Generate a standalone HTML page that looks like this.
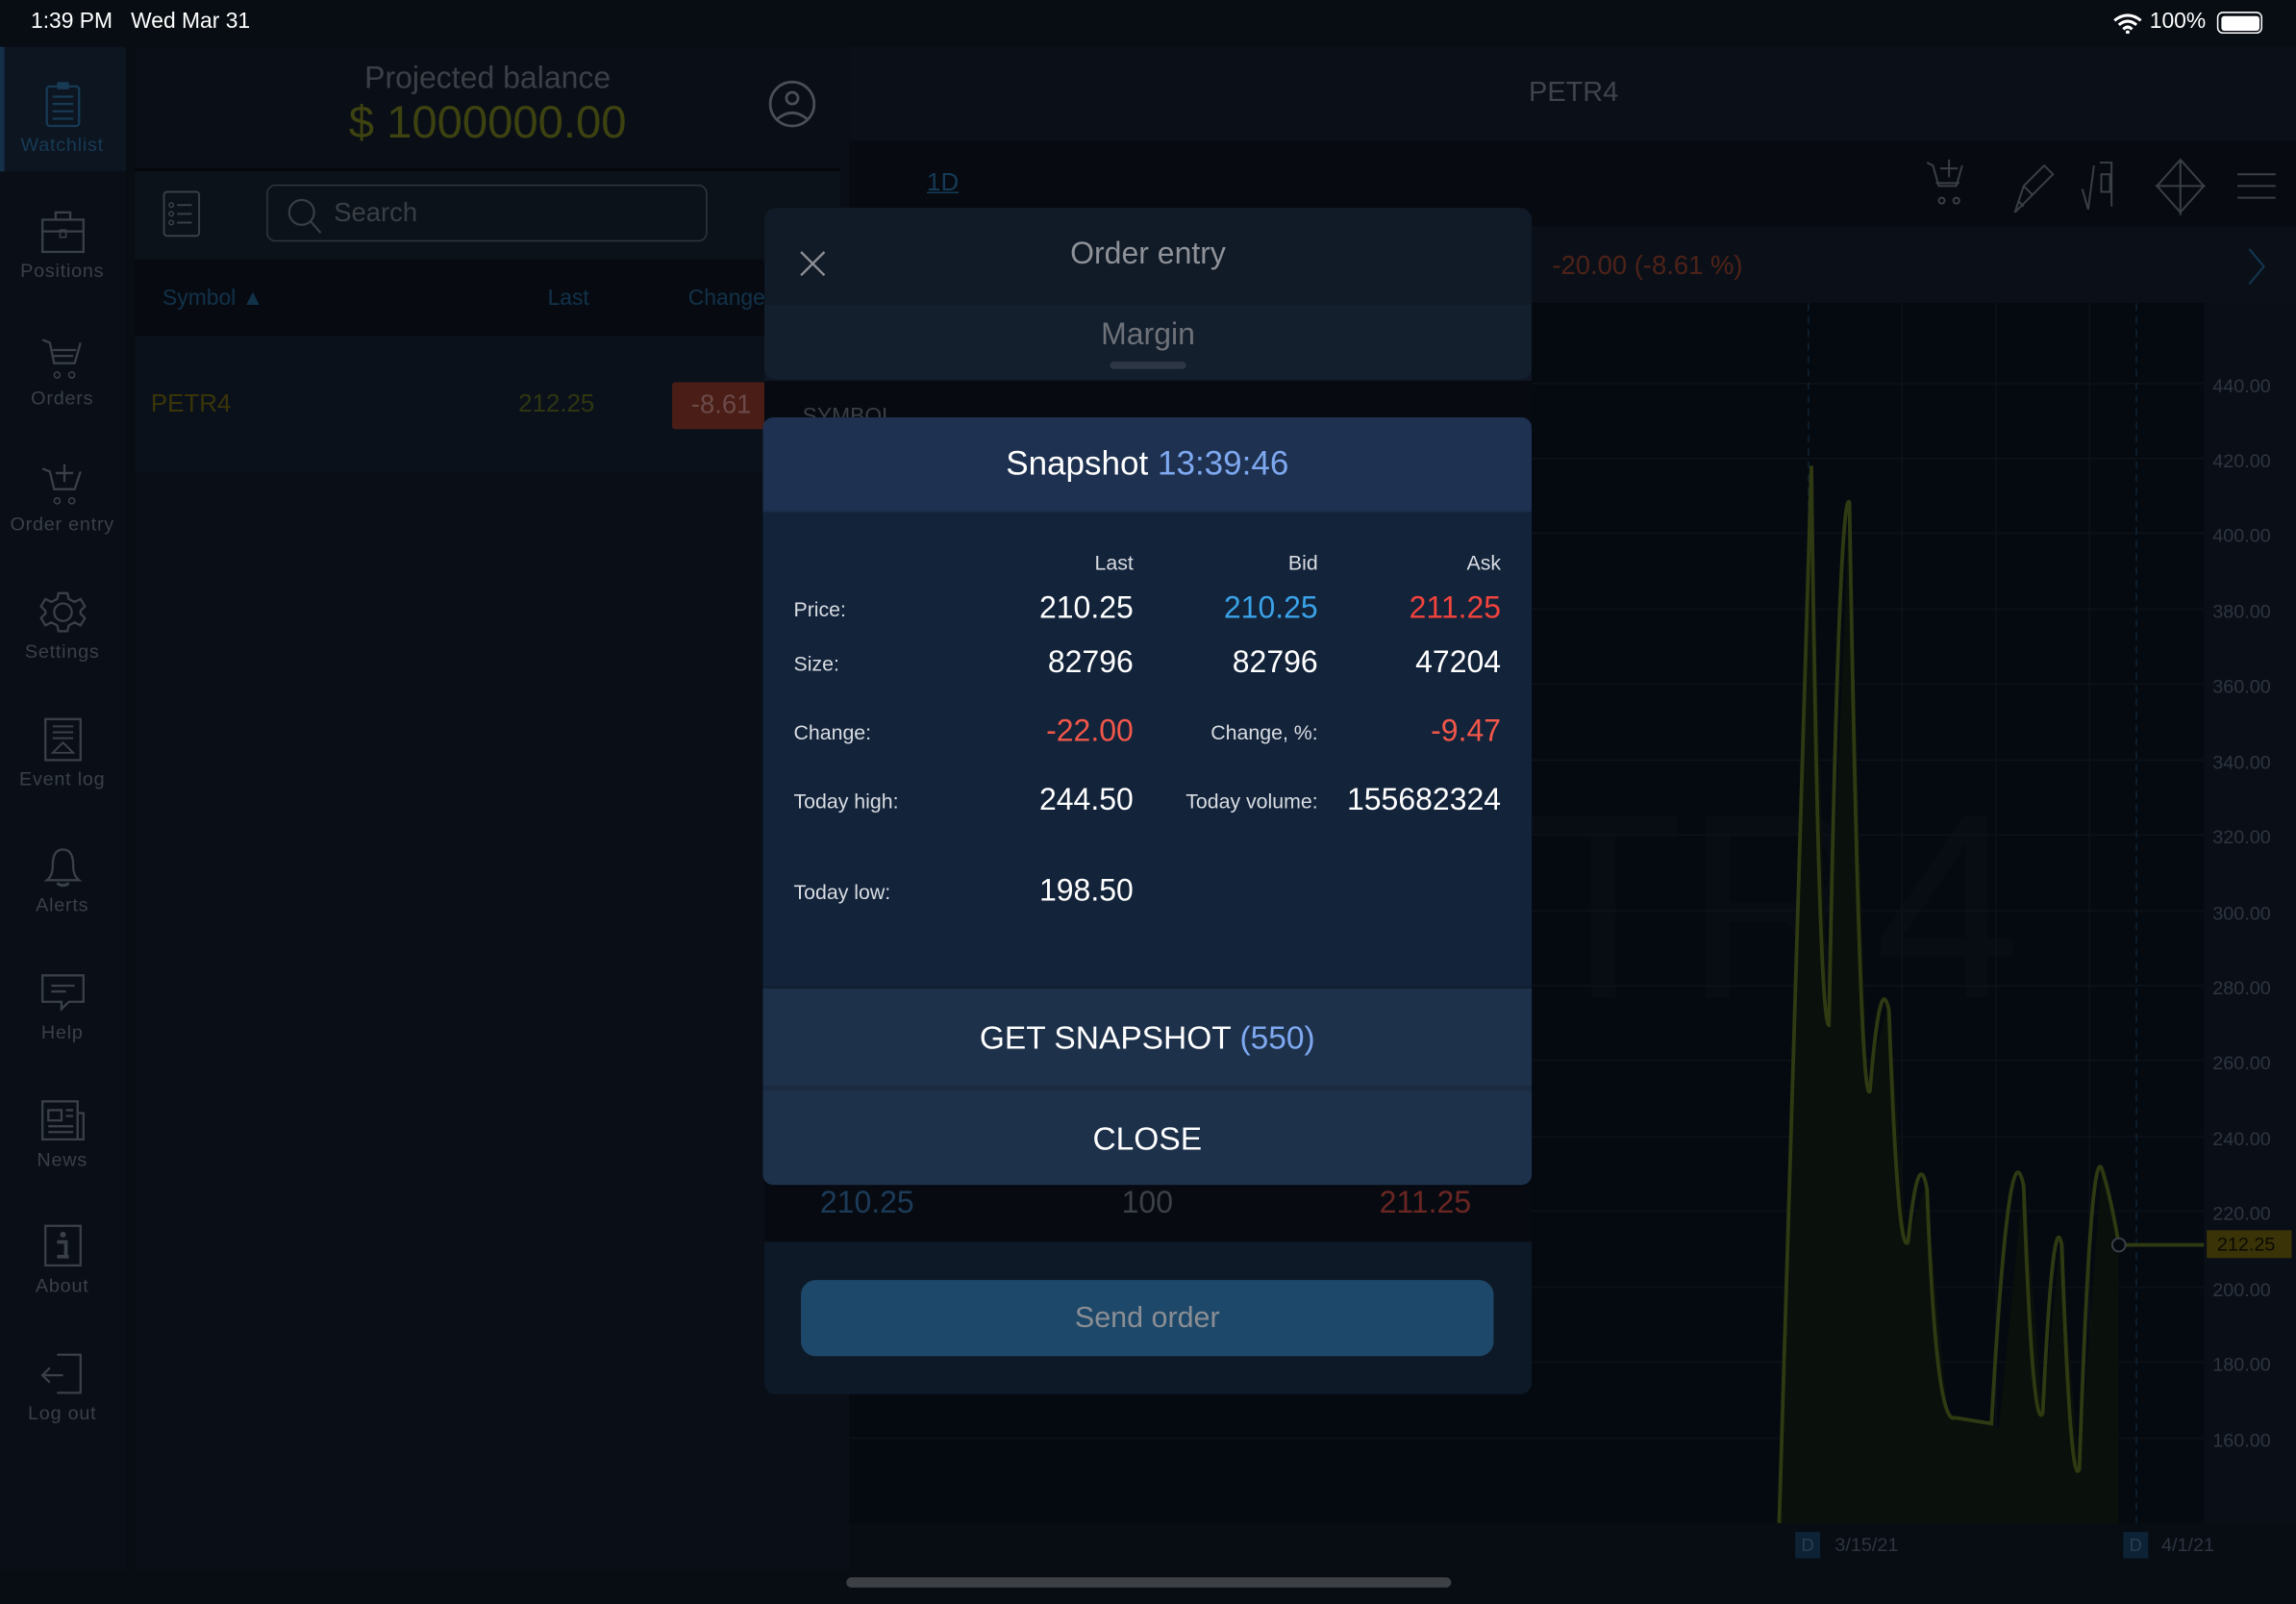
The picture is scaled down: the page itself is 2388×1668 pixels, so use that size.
<!DOCTYPE html>
<html><head><meta charset="utf-8">
<style>
*{margin:0;padding:0;box-sizing:border-box}
html,body{width:2388px;height:1668px;overflow:hidden;background:#0a0f16}
#s{position:absolute;left:0;top:0;width:1568px;height:1095px;transform:scale(1.523);transform-origin:0 0;font-family:"Liberation Sans",sans-serif;background:#080d14;color:#fff}
.a{position:absolute}
.t{white-space:nowrap}
.nav{position:absolute;left:0;width:85px;text-align:center;font-size:13px;color:#3a4048;letter-spacing:.5px}
.nav svg{display:block;margin:0 auto 4px}
.r{position:absolute;font-size:21px;text-align:right;white-space:nowrap}
.l{position:absolute;left:542px;font-size:14px;color:#d8dce2;white-space:nowrap}
.ax{position:absolute;left:1511px;font-size:13px;color:#2e3540}
</style></head><body>
<div id="s">
<div class="a t" style="left:21px;top:6px;font-size:15px;color:#fff">1:39 PM &nbsp;&nbsp;Wed Mar 31</div>
<div class="a t" style="left:1468px;top:6px;font-size:15px">100%</div>
<svg class="a" style="left:1443px;top:9px" width="20" height="14" viewBox="0 0 20 14"><path d="M1 5 Q10 -2 19 5 M4 8 Q10 3 16 8 M7 11 Q10 8 13 11" stroke="#fff" stroke-width="2" fill="none"/><circle cx="10" cy="13" r="1.3" fill="#fff"/></svg>
<div class="a" style="left:1514px;top:8px;width:31px;height:15px;border:1.5px solid #fff;border-radius:4px;padding:1.5px"><div style="width:100%;height:100%;background:#fff;border-radius:2px"></div></div>

<div class="a" style="left:0;top:32px;width:86px;height:1040px;background:#0a0f17"></div>
<div class="a" style="left:0;top:32px;width:86px;height:85px;background:#0d1520;border-left:3px solid #16304a"></div>
<div class="nav" style="top:55px;color:#173a55"><svg width="26" height="32" viewBox="0 0 26 32"><rect x="2" y="4" width="22" height="27" rx="2" fill="none" stroke="#173a55" stroke-width="1.5"/><rect x="9" y="1" width="8" height="5" fill="#173a55"/><path d="M6 11h14M6 16h14M6 21h14M6 26h14" stroke="#173a55" stroke-width="1.5"/></svg>Watchlist</div>
<div class="nav" style="top:143px"><svg width="32" height="30" viewBox="0 0 32 30"><rect x="2" y="7" width="28" height="22" fill="none" stroke="#3a4048" stroke-width="1.5"/><path d="M11 7V2h10v5M2 15h28" stroke="#3a4048" stroke-width="1.5" fill="none"/><rect x="14" y="14" width="4" height="5" fill="none" stroke="#3a4048"/></svg>Positions</div>
<div class="nav" style="top:230px"><svg width="32" height="30" viewBox="0 0 32 30"><path d="M2 2l5 2 3 14h14l4-14M9 9h16M9 13h14M10 18h14" stroke="#3a4048" stroke-width="1.5" fill="none"/><circle cx="12" cy="26" r="2" stroke="#3a4048" fill="none"/><circle cx="22" cy="26" r="2" stroke="#3a4048" fill="none"/></svg>Orders</div>
<div class="nav" style="top:316px"><svg width="32" height="30" viewBox="0 0 32 30"><path d="M2 4l5 2 3 12h14l4-12M17 1v12M11 7h12M10 18h14" stroke="#3a4048" stroke-width="1.5" fill="none"/><circle cx="12" cy="26" r="2" stroke="#3a4048" fill="none"/><circle cx="22" cy="26" r="2" stroke="#3a4048" fill="none"/></svg>Order entry</div>
<div class="nav" style="top:403px"><svg width="32" height="30" viewBox="0 0 32 30"><path d="M13 2h6l1 4 4 2 4-2 3 5-3 3v2l3 3-3 5-4-2-4 2-1 4h-6l-1-4-4-2-4 2-3-5 3-3v-2l-3-3 3-5 4 2 4-2z" stroke="#3a4048" stroke-width="1.5" fill="none"/><circle cx="16" cy="15" r="6" stroke="#3a4048" stroke-width="1.5" fill="none"/></svg>Settings</div>
<div class="nav" style="top:490px"><svg width="32" height="30" viewBox="0 0 32 30"><rect x="4" y="1" width="24" height="28" fill="none" stroke="#3a4048" stroke-width="1.5"/><path d="M9 6h14M9 10h14M9 14h14M9 24l7-7 7 7z" stroke="#3a4048" stroke-width="1.3" fill="none"/></svg>Event log</div>
<div class="nav" style="top:576px"><svg width="32" height="30" viewBox="0 0 32 30"><path d="M5 25q4-3 4-10q0-11 7-11q7 0 7 11q0 7 4 10z" stroke="#3a4048" stroke-width="1.5" fill="none"/><path d="M12 27q4 3 8 0" stroke="#3a4048" stroke-width="2" fill="none"/></svg>Alerts</div>
<div class="nav" style="top:663px"><svg width="32" height="30" viewBox="0 0 32 30"><path d="M2 3h28v18H20l-5 5v-5H2z M8 10h16M8 14h10" stroke="#3a4048" stroke-width="1.5" fill="none"/></svg>Help</div>
<div class="nav" style="top:750px"><svg width="32" height="30" viewBox="0 0 32 30"><path d="M2 2h24v26H2zM26 10h4v18H26M6 8h9v7H6zM18 8h5M18 12h5M6 19h17M6 23h17" stroke="#3a4048" stroke-width="1.5" fill="none"/></svg>News</div>
<div class="nav" style="top:836px"><svg width="32" height="30" viewBox="0 0 32 30"><rect x="4" y="1" width="24" height="27" fill="none" stroke="#3a4048" stroke-width="1.5"/><circle cx="16" cy="7" r="2" fill="#3a4048"/><path d="M12 12h6v10h2M12 22h8" stroke="#3a4048" stroke-width="2.5" fill="none"/></svg>About</div>
<div class="nav" style="top:923px"><svg width="32" height="30" viewBox="0 0 32 30"><path d="M12 2h16v26H12M2 16h14M7 11l-5 5 5 5" stroke="#3a4048" stroke-width="1.5" fill="none"/></svg>Log out</div>

<div class="a" style="left:92px;top:32px;width:488px;height:1040px;background:#0a0f17"></div>
<div class="a t" style="left:92px;top:42px;width:482px;text-align:center;font-size:21px;color:#3b4047">Projected balance</div>
<div class="a t" style="left:92px;top:66px;width:482px;text-align:center;font-size:31px;color:#3d4210">$ 1000000.00</div>
<svg class="a" style="left:524px;top:54px" width="34" height="34" viewBox="0 0 34 34"><circle cx="17" cy="17" r="15" stroke="#4a4e55" stroke-width="1.8" fill="none"/><circle cx="17" cy="13" r="4" stroke="#4a4e55" stroke-width="1.8" fill="none"/><path d="M6 28q11-10 22 0" stroke="#4a4e55" stroke-width="1.8" fill="none"/></svg>
<div class="a" style="left:92px;top:115px;width:482px;height:2px;background:#05080c"></div>
<div class="a" style="left:92px;top:117px;width:482px;height:60px;background:#0c1219"></div>
<svg class="a" style="left:111px;top:130px" width="27" height="32" viewBox="0 0 27 32"><rect x="1" y="1" width="24" height="30" rx="2" stroke="#3a3f46" stroke-width="1.3" fill="none"/><circle cx="6" cy="10" r="1.5" stroke="#3a3f46" fill="none"/><circle cx="6" cy="16" r="1.5" stroke="#3a3f46" fill="none"/><circle cx="6" cy="22" r="1.5" stroke="#3a3f46" fill="none"/><path d="M10 10h10M10 16h10M10 22h10" stroke="#3a3f46" stroke-width="1.3"/></svg>
<div class="a" style="left:182px;top:126px;width:301px;height:39px;border:1.3px solid #32363c;border-radius:6px"></div>
<svg class="a" style="left:195px;top:134px" width="28" height="28" viewBox="0 0 28 28"><circle cx="11" cy="11" r="8.5" stroke="#3a3f46" stroke-width="1.4" fill="none"/><path d="M17 17l7 8" stroke="#3a3f46" stroke-width="1.4"/></svg>
<div class="a t" style="left:228px;top:135px;font-size:18px;color:#3a3f46">Search</div>
<div class="a" style="left:92px;top:177px;width:482px;height:52px;background:#070b11"></div>
<div class="a t" style="left:111px;top:195px;font-size:15px;color:#12324a">Symbol ▲</div>
<div class="a t" style="left:374px;top:195px;font-size:15px;color:#12324a">Last</div>
<div class="a t" style="left:470px;top:195px;font-size:15px;color:#12324a">Change</div>
<div class="a" style="left:92px;top:230px;width:482px;height:92px;background:#0b111b"></div>
<div class="a t" style="left:103px;top:266px;font-size:17px;color:#3a3508">PETR4</div>
<div class="a t" style="left:354px;top:266px;font-size:17px;color:#2f3610">212.25</div>
<div class="a" style="left:459px;top:261px;width:70px;height:32px;background:#4a1d17;border-radius:2px"></div>
<div class="a t" style="left:472px;top:266px;font-size:18px;color:#6b4a48">-8.61</div>

<div class="a" style="left:580px;top:32px;width:988px;height:64px;background:#0b1018"></div>
<div class="a t" style="left:1044px;top:53px;font-size:19px;color:#3f444b">PETR4</div>
<div class="a" style="left:580px;top:96px;width:988px;height:58px;background:#070b11"></div>
<div class="a t" style="left:633px;top:115px;font-size:17px;color:#153a57;text-decoration:underline">1D</div>
<svg class="a" style="left:1310px;top:105px" width="250" height="42" viewBox="0 0 250 42"><g stroke="#3a3f46" stroke-width="1.3" fill="none"><path d="M6 6l4 2 4 14h12l4-14M21 4v12M15 10h12M12 20h16"/><circle cx="16" cy="32" r="2"/><circle cx="26" cy="32" r="2"/><path d="M66 40l6-18 14-14 6 6-14 14zM72 22l6 6M68 32l4 4"/><path d="M112 24l4 14 4-30M124 6h8v30M125 14h6v12h-6z"/><path d="M179 4v38M162 22h34M179 4l-16 18 16 18 16-18z"/><path d="M218 14h26M218 22h26M218 30h26"/></g></svg>
<div class="a" style="left:1045px;top:155px;width:523px;height:52px;background:#0b1018"></div>
<div class="a t" style="left:1060px;top:171px;font-size:18px;color:#4e2218">-20.00 (-8.61 %)</div>
<svg class="a" style="left:1533px;top:168px" width="16" height="28"><path d="M3 2l10 12-10 12" stroke="#123550" stroke-width="1.4" fill="none"/></svg>
<div class="a" style="left:580px;top:207px;width:925px;height:833px;background:#050a10"></div>
<div class="a" style="left:1505px;top:207px;width:63px;height:833px;background:#0a0f17"></div>
<div class="a t" style="left:1040px;top:520px;font-size:180px;line-height:200px;color:#080d13">TR4</div>
<svg class="a" style="left:580px;top:207px" width="988" height="860" viewBox="580 207 988 860">
<g stroke="#0d1219" stroke-width="1"><path d="M580 262h925M580 313h925M580 364h925M580 416h925M580 467h925M580 519h925M580 570h925M580 622h925M580 673h925M580 724h925M580 776h925M580 827h925M580 879h925M580 930h925M580 982h925"/><path d="M1299 207v833M1363 207v833M1427 207v833"/></g>
<g stroke="#0d2335" stroke-dasharray="5 4"><path d="M1235 207v833M1459 207v833"/></g>
<path d="M1215 1040 L1225 700 L1237 318 L1248 700 L1263 343 L1275 740 L1290 683 L1302 850 L1315 808 L1330 965 L1365 975 L1382 805 L1395 965 L1407 848 L1420 1005 L1435 800 L1447 850 L1447 1040Z" fill="#0a100b"/>
<path d="M1215 1040 Q1228 650 1237 318 Q1242 700 1249 700 Q1256 330 1263 343 Q1270 760 1277 745 Q1284 660 1290 690 Q1296 860 1303 848 Q1310 780 1316 812 Q1322 975 1335 968 L1360 972 Q1372 760 1382 810 Q1388 980 1395 965 Q1402 820 1408 850 Q1414 1020 1420 1003 Q1428 770 1436 800 Q1442 820 1447 850 L1505 850" stroke="#2f3a12" stroke-width="2.5" fill="none"/>
<circle cx="1447" cy="850" r="4.5" stroke="#3a4048" stroke-width="1.3" fill="#050a10"/>
</svg>
<div class="ax" style="top:256px">440.00</div><div class="ax" style="top:307px">420.00</div><div class="ax" style="top:358px">400.00</div><div class="ax" style="top:410px">380.00</div><div class="ax" style="top:461px">360.00</div><div class="ax" style="top:513px">340.00</div><div class="ax" style="top:564px">320.00</div><div class="ax" style="top:616px">300.00</div><div class="ax" style="top:667px">280.00</div><div class="ax" style="top:718px">260.00</div><div class="ax" style="top:770px">240.00</div><div class="ax" style="top:821px">220.00</div><div class="ax" style="top:873px">200.00</div><div class="ax" style="top:924px">180.00</div><div class="ax" style="top:976px">160.00</div>
<div class="a t" style="left:1507px;top:840px;width:58px;height:19px;background:#3a3308;color:#0a0a00;font-size:13px;padding:2px 0 0 7px">212.25</div>
<div class="a" style="left:1226px;top:1046px;width:17px;height:18px;background:#0d2335;color:#2a3f52;font-size:12px;text-align:center;line-height:18px">D</div>
<div class="a t" style="left:1253px;top:1047px;font-size:13px;color:#2e3540">3/15/21</div>
<div class="a" style="left:1450px;top:1046px;width:17px;height:18px;background:#0d2335;color:#2a3f52;font-size:12px;text-align:center;line-height:18px">D</div>
<div class="a t" style="left:1476px;top:1047px;font-size:13px;color:#2e3540">4/1/21</div>
<div class="a" style="left:578px;top:1077px;width:413px;height:7px;background:#3d4146;border-radius:4px"></div>

<div class="a" style="left:522px;top:142px;width:524px;height:810px;background:#0e1723;border-radius:8px"></div>
<div class="a" style="left:522px;top:142px;width:524px;height:117px;background:#111a27;border-radius:8px"></div>
<div class="a" style="left:522px;top:208px;width:524px;height:51px;background:#141f2e;border-radius:0 0 8px 8px"></div>
<svg class="a" style="left:545px;top:170px" width="20" height="20"><path d="M2 2l16 16M18 2L2 18" stroke="#8a8e94" stroke-width="1.6"/></svg>
<div class="a t" style="left:522px;top:162px;width:524px;text-align:center;font-size:21px;color:#8e9298">Order entry</div>
<div class="a t" style="left:522px;top:217px;width:524px;text-align:center;font-size:21px;color:#6d7178">Margin</div>
<div class="a" style="left:758px;top:247px;width:52px;height:5px;background:#2d3644;border-radius:3px"></div>
<div class="a" style="left:522px;top:260px;width:524px;height:590px;background:#070b11"></div>
<div class="a t" style="left:548px;top:276px;font-size:15px;color:#3a3f46">SYMBOL</div>
<div class="a t" style="left:560px;top:810px;font-size:21px;color:#1c3b58">210.25</div>
<div class="a t" style="left:766px;top:810px;font-size:21px;color:#3c4047">100</div>
<div class="a t" style="left:942px;top:810px;font-size:21px;color:#6a2623">211.25</div>
<div class="a" style="left:522px;top:848px;width:524px;height:104px;background:#0e1927;border-radius:0 0 8px 8px"></div>
<div class="a" style="left:547px;top:874px;width:473px;height:52px;background:#1e4869;border-radius:10px;text-align:center;line-height:52px;font-size:20px;color:#8a8e94">Send order</div>

<div class="a" style="left:521px;top:285px;width:525px;height:524px;background:#13233a;border-radius:7px;overflow:hidden">
 <div style="height:65px;background:#1e3150;border-bottom:1px solid #192a42"></div>
</div>
<div class="a t" style="left:521px;top:303px;width:525px;text-align:center;font-size:23px;color:#fff">Snapshot <span style="color:#7ea8f0">13:39:46</span></div>
<div class="r" style="right:794px;top:376px;font-size:14px;color:#d8dce2">Last</div>
<div class="r" style="right:668px;top:376px;font-size:14px;color:#d8dce2">Bid</div>
<div class="r" style="right:543px;top:376px;font-size:14px;color:#d8dce2">Ask</div>
<div class="l" style="top:408px">Price:</div>
<div class="r" style="right:794px;top:404px">210.25</div>
<div class="r" style="right:668px;top:404px;color:#3aa2e8">210.25</div>
<div class="r" style="right:543px;top:404px;color:#f2433c">211.25</div>
<div class="l" style="top:445px">Size:</div>
<div class="r" style="right:794px;top:441px">82796</div>
<div class="r" style="right:668px;top:441px">82796</div>
<div class="r" style="right:543px;top:441px">47204</div>
<div class="l" style="top:492px">Change:</div>
<div class="r" style="right:794px;top:488px;color:#f2574a">-22.00</div>
<div class="r" style="right:668px;top:492px;font-size:14px;color:#d8dce2">Change, %:</div>
<div class="r" style="right:543px;top:488px;color:#f2574a">-9.47</div>
<div class="l" style="top:539px">Today high:</div>
<div class="r" style="right:794px;top:535px">244.50</div>
<div class="r" style="right:668px;top:539px;font-size:14px;color:#d8dce2">Today volume:</div>
<div class="r" style="right:543px;top:535px">155682324</div>
<div class="l" style="top:601px">Today low:</div>
<div class="r" style="right:794px;top:597px">198.50</div>
<div class="a" style="left:521px;top:673px;width:525px;height:2px;background:#111f33"></div>
<div class="a" style="left:521px;top:675px;width:525px;height:66px;background:#1e314b"></div>
<div class="a t" style="left:521px;top:696px;width:525px;text-align:center;font-size:22px;color:#fff">GET SNAPSHOT <span style="color:#7ea8f0">(550)</span></div>
<div class="a" style="left:521px;top:741px;width:525px;height:4px;background:#1a2a41"></div>
<div class="a" style="left:521px;top:745px;width:525px;height:64px;background:#1e314b;border-radius:0 0 7px 7px"></div>
<div class="a t" style="left:521px;top:765px;width:525px;text-align:center;font-size:22px;color:#fff">CLOSE</div>
</div>
</body></html>
